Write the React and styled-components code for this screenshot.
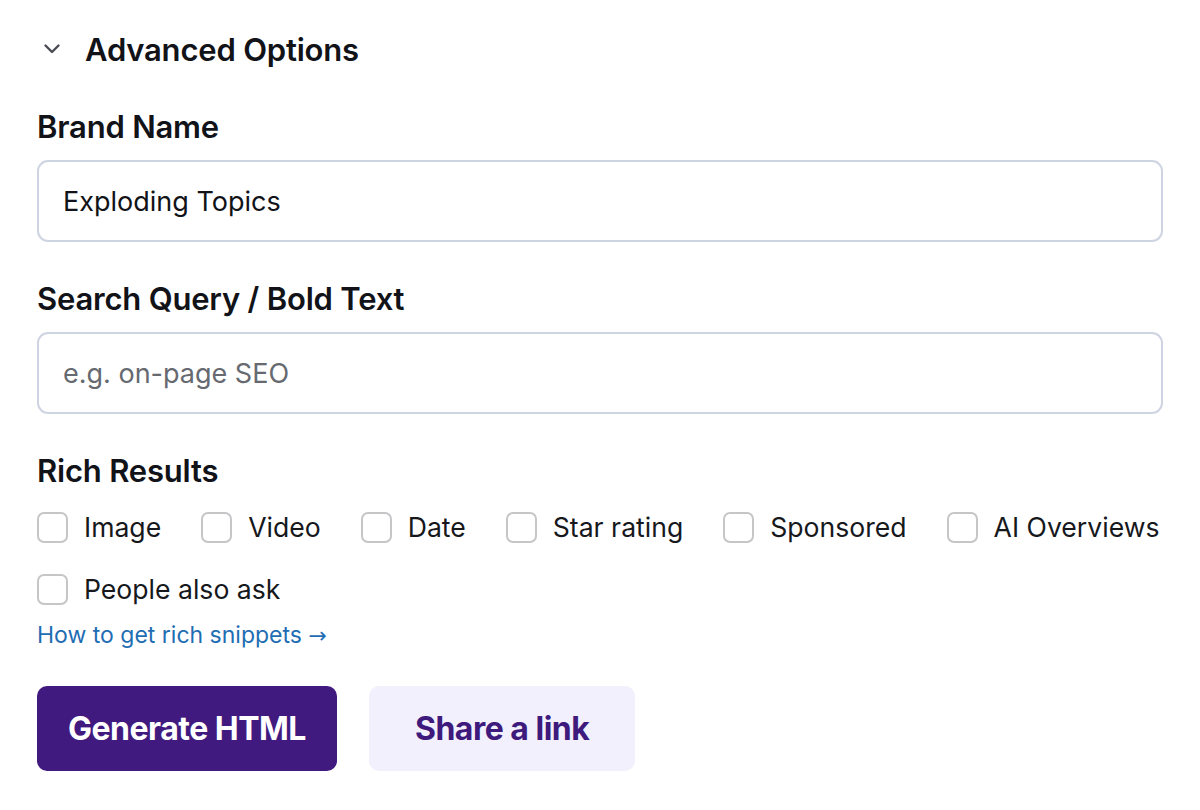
import styled, { createGlobalStyle } from "styled-components";

const GlobalStyle = createGlobalStyle`
  body {
    margin: 0;
    background: #ffffff;
    font-family: Inter, "Noto Sans", sans-serif;
    color: #111318;
  }
`;

const Panel = styled.div`
  padding: 27px 37px 30px 37px;
  width: 1126px;
  display: flex;
  flex-direction: column;
`;

const Toggle = styled.div`
  display: flex;
  align-items: center;
  gap: 24px;
  padding-left: 6px;
  height: 44px;
  margin-bottom: 37px;
`;

const ToggleTitle = styled.h2`
  margin: 0;
  font-size: 31px;
  font-weight: 600;
  letter-spacing: -0.2px;
`;

const Field = styled.div`
  display: flex;
  flex-direction: column;
  margin-bottom: 38px;
`;

const Label = styled.label`
  font-size: 31px;
  font-weight: 600;
  letter-spacing: -0.2px;
  line-height: 38px;
  margin-bottom: 14px;
`;

const Input = styled.input`
  box-sizing: border-box;
  height: 82px;
  width: 100%;
  border: 2px solid #cfd4e2;
  border-radius: 11px;
  padding: 0 24px;
  font-family: inherit;
  font-size: 27px;
  color: #111318;
  outline: none;
  &::placeholder {
    color: #666a70;
  }
`;

const Options = styled.div`
  display: flex;
  flex-wrap: wrap;
  column-gap: 40px;
  row-gap: 30px;
  margin-top: 7px;
`;

const Option = styled.label`
  display: flex;
  align-items: center;
  gap: 16px;
  font-size: 26.6px;
  line-height: 32px;
  color: #16181c;
  white-space: nowrap;
`;

const Box = styled.span`
  box-sizing: border-box;
  width: 31px;
  height: 31px;
  border: 2px solid #c6c6c8;
  border-radius: 7px;
  background: #fff;
`;

const HelpLink = styled.a`
  margin-top: 15px;
  font-size: 23px;
  color: #1f6db3;
  text-decoration: none;
  line-height: 30px;
`;

const Arrow = styled.span`
  font-family: "DejaVu Sans", sans-serif;
  font-size: 22px;
`;

const Actions = styled.div`
  display: flex;
  gap: 32px;
  margin-top: 35px;
`;

const Button = styled.button`
  height: 85px;
  padding: 0 ${(p) => (p.$primary ? "31px" : "46px")};
  border: none;
  border-radius: 10px;
  font-family: inherit;
  font-size: 32px;
  font-weight: 700;
  letter-spacing: -0.5px;
  cursor: pointer;
  background: ${(p) => (p.$primary ? "#411a80" : "#f1f0fc")};
  color: ${(p) => (p.$primary ? "#ffffff" : "#3e1a7c")};
`;

const Chevron = () => (
  <svg width="18" height="12" viewBox="0 0 18 12" fill="none">
    <path d="M2.5 2.5l6.5 6.5 6.5-6.5" stroke="#4a4d55" strokeWidth="2.4" strokeLinecap="round" strokeLinejoin="round" />
  </svg>
);

const richResults = ["Image", "Video", "Date", "Star rating", "Sponsored", "AI Overviews", "People also ask"];

export default function App() {
  return (
    <>
      <GlobalStyle />
      <Panel>
        <Toggle>
          <Chevron />
          <ToggleTitle>Advanced Options</ToggleTitle>
        </Toggle>
        <Field>
          <Label>Brand Name</Label>
          <Input defaultValue="Exploding Topics" />
        </Field>
        <Field>
          <Label>Search Query / Bold Text</Label>
          <Input placeholder="e.g. on-page SEO" />
        </Field>
        <Label>Rich Results</Label>
        <Options>
          {richResults.map((r) => (
            <Option key={r}>
              <Box />
              {r}
            </Option>
          ))}
        </Options>
        <HelpLink href="#">
          How to get rich snippets <Arrow>→</Arrow>
        </HelpLink>
        <Actions>
          <Button $primary>Generate HTML</Button>
          <Button>Share a link</Button>
        </Actions>
      </Panel>
    </>
  );
}
